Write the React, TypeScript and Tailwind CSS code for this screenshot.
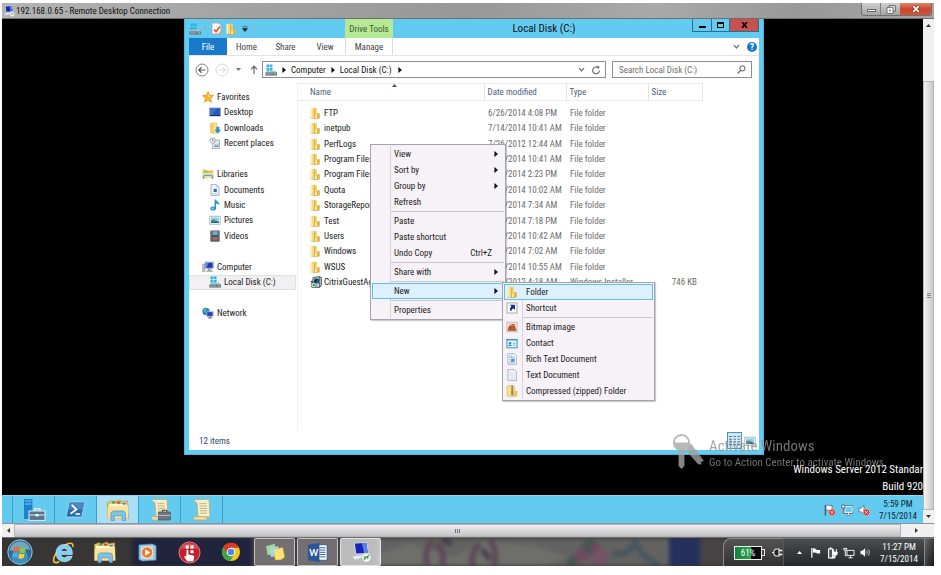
import React from 'react';
import type { ReactNode } from 'react';

type P = { className?: string };

/* ---------- small icons ---------- */

const Folder = ({ className = 'w-[10px] h-[12px]' }: P) => (
  <svg viewBox="0 0 10 12" className={className} aria-hidden="true">
    <path d="M.6 1 5.4.4V11.6L.6 11z" fill="#f3db83" />
    <path d="M.6 1 2 .8V11.200L.6 11z" fill="#fbf0bd" />
    <path d="M4.600 1.600 6.800.8V7l2.800-.6V11L4.600 11.800z" fill="#f0cf66" />
    <path d="M6.800 6.600 9.600 6V11l-2.800.6z" fill="#dfb543" />
    <path d="M4.600 1.600V11.800" stroke="#cfa23a" strokeWidth="0.8" />
    <path d="M5.400 7.400h1.400v3.600H5.400z" fill="#fdf3c6" />
    <path d="M.6 11 4.600 11.800 9.600 11" fill="none" stroke="#c99f3a" strokeWidth="0.5" />
  </svg>
);

const Drive = ({ className = 'w-[12px] h-[12px]' }: P) => (
  <svg viewBox="0 0 12 12" className={className} aria-hidden="true">
    <path d="M1.5 0.5h2.6v2.8H1.5zM4.7 0.5h2.8v2.8H4.7zM1.5 3.9h2.6v2.8H1.5zM4.7 3.9h2.8v2.8H4.7z" fill="#27b4ea" />
    <path d="M1.8 7 L10 6.5 L12 8.5 H0.4z" fill="#b9c2c8" />
    <path d="M0.4 8.3H12V11.6H0.4z" fill="#6d7a84" />
    <path d="M1.2 9.2h6v1.4h-6z" fill="#8f9ca5" />
    <path d="M9 9.2h2v1.4H9z" fill="#5fe07c" />
  </svg>
);

const DocCheck = () => (
  <svg viewBox="0 0 11 13" className="h-[13px] w-[11px]" aria-hidden="true">
    <path d="M1 1h6.5L10 3.5V12H1z" fill="#fff" stroke="#b49a94" strokeWidth="0.8" />
    <path d="M3 7.5 L5 9.8 L9 4.5" fill="none" stroke="#e0512a" strokeWidth="1.6" />
    <path d="M6.5 12 L10 8.5V12z" fill="#f0a27b" />
  </svg>
);

const Star = () => (
  <svg viewBox="0 0 12 12" className="h-[12px] w-[12px]" aria-hidden="true">
    <path d="M6 .6 7.6 4.3 11.6 4.6 8.6 7.2 9.5 11.2 6 9.1 2.5 11.2 3.4 7.2.4 4.6 4.4 4.3z" fill="#fcb92d" stroke="#e78a1c" strokeWidth="0.7" />
    <path d="M6 2.4 7 5 9.4 5.2 6 6.5z" fill="#ffe28a" />
  </svg>
);

const DesktopIcon = () => (
  <svg viewBox="0 0 12 12" className="h-[12px] w-[12px]" aria-hidden="true">
    <rect x="0.7" y="2" width="10.6" height="8" fill="#2559b8" stroke="#7f95b8" strokeWidth="0.8" />
    <path d="M1 2.4h6.5L3 9.6H1z" fill="#5b8ce0" opacity="0.5" />
    <path d="M1 9h10v1H1z" fill="#1b2f57" />
  </svg>
);

const Downloads = () => (
  <svg viewBox="0 0 12 12" className="h-[12px] w-[12px]" aria-hidden="true">
    <path d="M.8 1l4.400-.7V11.5L.8 11z" fill="#f0d272" />
    <path d="M4 1.6 8 .8V11L4 11.8z" fill="#f8e294" stroke="#d4ab45" strokeWidth="0.4" />
    <path d="M7.6 5h2.4v3h1.6L8.8 11.6 6 8h1.6z" fill="#2f93dc" stroke="#1b6cae" strokeWidth="0.4" />
  </svg>
);

const Recent = () => (
  <svg viewBox="0 0 12 12" className="h-[12px] w-[12px]" aria-hidden="true">
    <path d="M4 3h6.5v8.5H3z" fill="#dfe5ea" stroke="#93a2ae" strokeWidth="0.7" />
    <circle cx="3.6" cy="3.6" r="2.7" fill="#eef3f7" stroke="#8b9aa8" strokeWidth="0.8" />
    <path d="M3.6 2v1.8h1.4" fill="none" stroke="#55677a" strokeWidth="0.6" />
    <path d="M5 9.5 6.5 7 8 8.5 9.5 6v4H5z" fill="#7fa3c0" />
  </svg>
);

const Libraries = () => (
  <svg viewBox="0 0 12 12" className="h-[12px] w-[12px]" aria-hidden="true">
    <path d="M.6 1.6h4l.8 1h6V9H.6z" fill="#e8c65c" />
    <path d="M2 3h4v3H2z" fill="#7cc46e" />
    <path d="M6 3.4h4v3H6z" fill="#e9a95c" />
    <path d="M.6 4.600h10.8V10H.6z" fill="#f8e08c" />
    <path d="M1.6 11V8.8c0-1 .6-1.4 1.4-1.4h6c.8 0 1.4.4 1.4 1.4v2.2" fill="none" stroke="#4ea6da" strokeWidth="1.4" />
  </svg>
);

const Documents = () => (
  <svg viewBox="0 0 12 12" className="h-[12px] w-[12px]" aria-hidden="true">
    <path d="M2 .6h5.6L10 3v8.4H2z" fill="#f6f9fc" stroke="#8fa1b3" strokeWidth="0.8" />
    <path d="M7.6.6V3H10" fill="#d5dfe8" stroke="#8fa1b3" strokeWidth="0.5" />
    <rect x="4.6" y="4.8" width="3.2" height="3.2" fill="#2f6fb5" />
    <path d="M3.4 9.6h5" stroke="#9db2c6" strokeWidth="0.7" />
  </svg>
);

const Music = () => (
  <svg viewBox="0 0 12 12" className="h-[12px] w-[12px]" aria-hidden="true">
    <path d="M5.6.4h1.4c.2 2 3.8 2.200 3.400 5.800-.6-1.200-1.800-1.600-3.400-1.800v5c0 1.400-1.4 2.2-3 2.2S1 10.8 1.200 9.400c.2-1.400 2-2.200 4.400-1.600z" fill="#2a8fda" />
    <ellipse cx="3.6" cy="9.4" rx="1.4" ry="1" fill="#86c8f5" />
  </svg>
);

const Pictures = () => (
  <svg viewBox="0 0 12 12" className="h-[12px] w-[12px]" aria-hidden="true">
    <rect x="0.8" y="2.2" width="10.4" height="8" fill="#fff" stroke="#98a6b3" strokeWidth="0.8" />
    <path d="M2 3.4h8v5.6H2z" fill="#8fcdf0" />
    <path d="M2 6.6 5 5.6 10 8v1H2z" fill="#3b8f55" />
    <path d="M2 8h8v1H2z" fill="#1f5fa5" />
  </svg>
);

const Videos = () => (
  <svg viewBox="0 0 12 12" className="h-[12px] w-[12px]" aria-hidden="true">
    <rect x="1.4" y="0.6" width="9.2" height="11" fill="#38414b" />
    <path d="M3.4 1.2h5.2v4H3.4z" fill="#6fb0cf" />
    <path d="M3.4 6.6h5.2v4H3.4z" fill="#a06a60" />
    <path d="M2.3 1.4v9.6M9.7 1.4v9.6" stroke="#e8edf2" strokeWidth="0.7" strokeDasharray="1 1" />
  </svg>
);

const Computer = () => (
  <svg viewBox="0 0 12 12" className="h-[12px] w-[12px]" aria-hidden="true">
    <path d="M.4 3h2.6v7.6H.4z" fill="#b8c0c8" stroke="#7b8794" strokeWidth="0.4" />
    <rect x="3" y="1" width="8.4" height="6.6" fill="#c6cdd4" stroke="#7d8892" strokeWidth="0.5" />
    <rect x="3.8" y="1.8" width="6.8" height="5" fill="#1c38b8" />
    <path d="M3.8 1.8h3L4.600 6.8H3.8z" fill="#5f7fe6" />
    <path d="M6 7.6h2.6v1.6H6zM4.6 9.2h5.6l.8 1.6H4z" fill="#98a3ad" />
  </svg>
);

const Network = () => (
  <svg viewBox="0 0 12 12" className="h-[12px] w-[12px]" aria-hidden="true">
    <circle cx="4" cy="4.4" r="3.6" fill="#2b7bd6" />
    <path d="M1.4 3C3 1 4 2 5.4 1.2 4.6 3 3 3.4 3.4 5.4 2 5.4 1.2 4.4 1.4 3z" fill="#53c860" />
    <rect x="4.4" y="4.4" width="7" height="5.2" fill="#dfe5ec" stroke="#7d8892" strokeWidth="0.4" />
    <rect x="5.1" y="5.1" width="5.6" height="3.8" fill="#1c46c4" />
    <path d="M7 9.6h2v1H7zM5.8 10.6h4.4v.9H5.8z" fill="#6d7a88" />
  </svg>
);

const Installer = () => (
  <svg viewBox="0 0 12 12" className="h-[12px] w-[12px]" aria-hidden="true">
    <path d="M3 1.5 9.6.5 11.4 1.5V9L9.8 11.4H2z" fill="#c3cbd1" stroke="#36424c" strokeWidth="0.8" />
    <path d="M4 2.6h5v4.8H4z" fill="#1e5f93" />
    <path d="M9.6.6v10.6" stroke="#36424c" strokeWidth="0.7" />
    <path d="M1 5 3 7.4 7.2 3" fill="none" stroke="#111" strokeWidth="1.1" />
    <circle cx="3.6" cy="9" r="2.6" fill="#e8f3e8" stroke="#3d4a55" strokeWidth="0.6" />
    <circle cx="3.8" cy="9" r="1.3" fill="#2fa84c" />
  </svg>
);

const ShortcutIcon = () => (
  <svg viewBox="0 0 12 12" className="h-[12px] w-[12px]" aria-hidden="true">
    <rect x="1" y="1" width="10" height="10" fill="#fff" stroke="#9aa3ad" strokeWidth="0.9" />
    <path d="M4 2.8H9v5L7.4 6.4C6 7 5.4 8 5.2 9.6 3.4 8 3.6 5.6 5.4 4.4z" fill="#1d2f86" />
  </svg>
);

const Bitmap = () => (
  <svg viewBox="0 0 12 12" className="h-[12px] w-[12px]" aria-hidden="true">
    <rect x="0.8" y="1.2" width="10.4" height="9.8" fill="#e6dfd9" stroke="#c2b8b0" strokeWidth="0.7" />
    <path d="M2 7.6C3 4 6 2.4 8.4 3.4L10 8.6H2z" fill="#d8402e" />
    <path d="M4 4.800 6 3.4 7.6 5z" fill="#f3b33c" />
    <path d="M1.8 8h8.4v2H1.8z" fill="#a8693a" />
    <path d="M5.600 6.600h2.4v1.2H5.600z" fill="#5f9c46" />
  </svg>
);

const Contact = () => (
  <svg viewBox="0 0 12 12" className="h-[12px] w-[12px]" aria-hidden="true">
    <rect x="0.9" y="2.4" width="10.2" height="8.400" fill="#dff1fb" stroke="#3c98cc" strokeWidth="1" />
    <path d="M.6 2h10.8v1.4H.6z" fill="#3c98cc" />
    <circle cx="4" cy="6.2" r="1.2" fill="#3a86a8" />
    <path d="M2.2 9c.4-1.8 3.2-1.8 3.6 0z" fill="#3a86a8" />
    <path d="M7 6.4h2.600M7 8.200h2.600" stroke="#5cafc8" strokeWidth="0.8" />
  </svg>
);

const RichText = () => (
  <svg viewBox="0 0 12 12" className="h-[12px] w-[12px]" aria-hidden="true">
    <path d="M1.8.6H8L10.4 3v8.4H1.8z" fill="#edf4fb" stroke="#9db0c4" strokeWidth="0.8" />
    <path d="M3.2 3h3M3.2 4.6h5.6M3.2 9.8h5.6" stroke="#7f9fc4" strokeWidth="0.7" />
    <path d="M5 5.8h3.6v3H5z" fill="#4e93d2" />
    <path d="M3.2 6.4h1.2M3.2 8h1.2" stroke="#7f9fc4" strokeWidth="0.7" />
  </svg>
);

const TextDoc = () => (
  <svg viewBox="0 0 12 12" className="h-[12px] w-[12px]" aria-hidden="true">
    <path d="M1.8.6H8L10.4 3v8.4H1.8z" fill="#f0f4f9" stroke="#9aa8b8" strokeWidth="0.8" />
    <path d="M3.2 3.4h3.4M3.2 5h5.6M3.2 6.6h5.6M3.2 8.2h5.6M3.2 9.8h5.6" stroke="#cfdae6" strokeWidth="0.6" />
  </svg>
);

const Zip = () => (
  <svg viewBox="0 0 12 12" className="h-[12px] w-[12px]" aria-hidden="true">
    <path d="M1 1 6 .4V11.6L1 11z" fill="#f6e08c" stroke="#d4ab45" strokeWidth="0.5" />
    <path d="M6 .8 8.400 1.200V5.800L11 6.400V11L6 11.6z" fill="#edca60" stroke="#d4ab45" strokeWidth="0.5" />
    <path d="M6.2.8v6.600" stroke="#5d6975" strokeWidth="1.6" strokeDasharray="1 .7" />
    <path d="M5.2 7.2h2v2.6h-2z" fill="#6f7c88" />
  </svg>
);

const Tri = ({ className = 'h-[6px] w-[4px]' }: P) => (
  <svg viewBox="0 0 4 6" className={className} aria-hidden="true">
    <path d="M.4 0 4 3 .4 6z" fill="#111" />
  </svg>
);

const Chevron = ({ className = 'h-[5px] w-[7px]' }: P) => (
  <svg viewBox="0 0 7 5" className={className} aria-hidden="true">
    <path d="M1 1 3.5 4 6 1" fill="none" stroke="#777" strokeWidth="1.2" />
  </svg>
);

/* ---------- taskbar icons ---------- */

const ServerManager = () => (
  <svg viewBox="0 0 24 24" className="h-[24px] w-[24px]" aria-hidden="true">
    <path d="M2 1h8.4v20H2z" fill="#1b83cc" />
    <path d="M3 2h6.4v2H3zM3 5h6.4v2H3z" fill="#4aa9e4" />
    <path d="M12.6 13v-2.2h5.4V13" fill="none" stroke="#dfe7ec" strokeWidth="1.4" />
    <rect x="7" y="13" width="16" height="9.4" fill="#56748c" stroke="#e3edf4" strokeWidth="1" />
    <path d="M7.4 17h15.2" stroke="#e3edf4" strokeWidth="1" />
    <path d="M13.6 16h3v2.4h-3z" fill="#fff" />
  </svg>
);

const PowerShell = () => (
  <svg viewBox="0 0 22 18" className="h-[17px] w-[21px]" aria-hidden="true">
    <path d="M4.4 1H21L17.6 17H1z" fill="#2a6aa8" stroke="#a8d3ee" strokeWidth="1" />
    <path d="M5 2h15.4L18.6 9H3.4z" fill="#5794c8" opacity="0.7" />
    <path d="M7 4.2 12 9 5.8 13.6" fill="none" stroke="#fff" strokeWidth="1.9" />
    <path d="M11 13.8h5" stroke="#fff" strokeWidth="1.7" />
  </svg>
);

const Explorer = () => (
  <svg viewBox="0 0 24 24" className="h-[24px] w-[24px]" aria-hidden="true">
    <path d="M1.4 4.6 6 2.6l2 1.6 6-2.2 1.6 1.8 6-1 .8 17.6H1.6z" fill="#e7c768" stroke="#b98f35" strokeWidth="0.6" />
    <path d="M3 6h18v5H3z" fill="#fdf6d3" />
    <path d="M6 3.4h3.4v2H6z" fill="#55a045" />
    <path d="M11 3.6h3.4v2H11z" fill="#d5432f" />
    <path d="M16.6 5h3.2v1.6h-3.2z" fill="#3f7fd0" />
    <path d="M1.8 8.6 22 7.6V20.6H1.6z" fill="#f7e39b" />
    <path d="M5 22.6V16c0-2 1-3 3-3h8.4c2 0 3 1 3 3v6.6h-3.2v-4.8H8.2v4.8z" fill="#7fc2ea" stroke="#4990c4" strokeWidth="0.7" />
  </svg>
);

const Scroll = ({ tool = false }: { tool?: boolean }) => (
  <svg viewBox="0 0 22 24" className="h-[24px] w-[22px]" aria-hidden="true">
    <path d="M4.6 1.4H19c-1 1-1.2 2-.8 3.6L19 19H7L6 5C5.6 3.4 3.4 4.4 3.2 3 3 2 3.6 1.4 4.6 1.4z" fill="#f7edcb" stroke="#bda465" strokeWidth="0.7" />
    <path d="M2.4 18.6h13c0 2 .4 3 2 3.4H4.6c-1.6 0-2.4-1.4-2.2-3.4z" fill="#eddba6" stroke="#bda465" strokeWidth="0.7" />
    <path d="M8.4 5.6h7.2M8.6 8h7.2M8.8 10.4H16M9 12.8h7M9 15.2h7" stroke="#b9a67a" strokeWidth="0.8" />
    {tool && (
      <g>
        <path d="M13.6 14v-1.8h4.2V14" fill="none" stroke="#444d55" strokeWidth="1.1" />
        <path d="M9.4 14h12v8h-12z" fill="#6c7780" stroke="#3d464e" strokeWidth="0.6" />
        <path d="M9.4 17.4h12" stroke="#d3dae0" strokeWidth="0.8" />
      </g>
    )}
  </svg>
);

const StartOrb = () => (
  <svg viewBox="0 0 26 26" className="h-[26px] w-[26px]" aria-hidden="true">
    <circle cx="13" cy="13" r="12.2" fill="#2d6c97" stroke="#9dc6dd" strokeWidth="1" />
    <circle cx="13" cy="18" r="8" fill="#48a8cf" opacity="0.65" />
    <path d="M2.6 11a10.6 10.6 0 0 1 20.8 0C17 8.6 9 14 2.6 11z" fill="#b5d4e4" opacity="0.55" />
    <path d="M7 8.4c2-1 3.6-1 5.4 0l-1 4.6c-1.8-1-3.4-1-5.4 0z" fill="#ee6a2e" />
    <path d="M13.4 8.8c2 1 3.6 1 5.6 0l-1.2 4.6c-2 1-3.6 1-5.4 0z" fill="#8cc83c" />
    <path d="M5.8 14c2-1 3.6-1 5.4 0l-1 4.4c-1.8-1-3.4-1-5.2 0z" fill="#4fa8ea" />
    <path d="M12.2 14.4c2 1 3.6 1 5.4 0l-1 4.6c-2 1-3.6 1-5.4 0z" fill="#fbcf3b" />
  </svg>
);

const InternetExplorer = () => (
  <svg viewBox="0 0 24 24" className="h-[23px] w-[23px]" aria-hidden="true">
    <path d="M21.600 6.200C22.600 3 20.600 1.400 16.600 2.800 9 5.400 1.400 14.800 1.600 20.200c.2 3 3.200 2.800 6 1.200" fill="none" stroke="#f5c531" strokeWidth="1.600" />
    <path fillRule="evenodd" d="M12.8 3.600C7.400 3.600 4.200 7.600 4.200 12.600c0 5.400 3.600 9 8.800 9 4.200 0 7-2.200 8-5.600h-5.200c-.6 1-1.600 1.400-2.800 1.400-2.200 0-3.600-1.400-3.800-3.400h12C21.600 8 18.600 3.600 12.800 3.600zM9.200 10.800c.4-1.900 1.800-3 3.600-3s3.200 1.100 3.400 3z" fill="#7ed0f4" stroke="#e4f5fd" strokeWidth="0.6" />
  </svg>
);

const MediaPlayer = () => (
  <svg viewBox="0 0 20 20" className="h-[19px] w-[19px]" aria-hidden="true">
    <path d="M1 2 15 1 19 3V18L5 19 1 17.400z" fill="#8fc3e2" stroke="#5a93ba" strokeWidth="0.700" />
    <path d="M3 3.600 16 2.800V17L3 17.200z" fill="#b9dcef" />
    <circle cx="9.600" cy="10" r="6" fill="#ee7a22" stroke="#fff" strokeWidth="0.800" />
    <path d="M7.600 6.600 13 10 7.600 13.400z" fill="#fff" />
  </svg>
);

const RedApp = () => (
  <svg viewBox="0 0 24 24" className="h-[23px] w-[23px]" aria-hidden="true">
    <circle cx="12" cy="12" r="11" fill="#c2202c" stroke="#e98088" strokeWidth="1" />
    <path d="M2.600 9a10 10 0 0 1 18.800 0c-6-3-13-3-18.800 0z" fill="#ef8088" opacity="0.500" />
    <path d="M8 4.800h3.200V8H8zM13 4.800h3.200V8H13zM13 9.600h3.200v3.200H13z" fill="#fff" />
    <path d="M9 9.400c1-.4 1.800 0 1.800 1V14l5 1c1 .4 1.200 1 1 2l-.8 4H9.600L6.400 16.400c.2-1 1.400-1 2.200 0z" fill="#fff" />
  </svg>
);

const Chrome = () => (
  <svg viewBox="0 0 22 22" className="h-[20px] w-[20px]" aria-hidden="true">
    <circle cx="11" cy="11" r="10" fill="#f3c71f" />
    <path d="M2.300 6A10 10 0 0 0 10 21l4.600-7.600L6.800 13z" fill="#3fa24a" />
    <path d="M2.300 6A10 10 0 0 1 19.800 6.200H11L7 13z" fill="#d93a2b" />
    <circle cx="11" cy="11" r="4.700" fill="#fff" />
    <circle cx="11" cy="11" r="3.600" fill="#4a8be6" />
  </svg>
);

const StickyNotes = () => (
  <svg viewBox="0 0 24 22" className="h-[20px] w-[22px]" aria-hidden="true">
    <path d="M2 4.600 11.600 2 13.600 12 4 14.600z" fill="#9ddc8f" />
    <path d="M6 6 15.600 4.600 17 15 7.600 16.600z" fill="#a7d4ef" />
    <path d="M10.400 8.400 20.400 6 22.600 16.600 18.600 19.600 12.400 19.800z" fill="#fbe36f" stroke="#dcb93c" strokeWidth="0.400" />
  </svg>
);

const WordIcon = () => (
  <svg viewBox="0 0 22 22" className="h-[21px] w-[21px]" aria-hidden="true">
    <rect x="11" y="3" width="10" height="16" fill="#fff" stroke="#2b579a" strokeWidth="0.800" />
    <path d="M13 6h6.400M13 8.400h6.400M13 10.800h6.400M13 13.200h6.400M13 15.600h6.400" stroke="#2b579a" strokeWidth="1" />
    <path d="M1 3 13 .8V21.200L1 19z" fill="#2b579a" />
    <text x="7" y="14.400" textAnchor="middle" fontSize="9" fontWeight="700" fill="#fff" fontFamily="Lato, sans-serif">W</text>
  </svg>
);

const RemoteDesktop = ({ className = 'h-[22px] w-[22px]' }: P) => (
  <svg viewBox="0 0 22 22" className={className} aria-hidden="true">
    <path d="M4 2 17 1.400 18.600 12.600 5.600 13.400z" fill="#dfe6ee" />
    <path d="M4.800 2.600 16.400 2 17.800 12 6.200 12.600z" fill="#1526b4" />
    <path d="M12 2.200 16.400 2 17.800 12 14 12.200z" fill="#5d80e8" />
    <path d="M1.400 15.400 12 13.600l4 2.400L5 19z" fill="#e7ecf1" stroke="#a4aeb8" strokeWidth="0.500" />
    <circle cx="16.400" cy="16.600" r="4.600" fill="#f5f8f5" stroke="#a9b5ab" strokeWidth="0.600" />
    <path d="M13.800 18.600l2-1.800-1.400-1.600M19 14.200l-2 1.800 1.400 1.600" fill="none" stroke="#2a9a3c" strokeWidth="1.300" />
  </svg>
);

/* ---------- tray icons ---------- */

const BadgeX = ({ x }: { x: number }) => (
  <g>
    <circle cx={x} cy="8.400" r="3.300" fill="#d9332b" stroke="#fff" strokeWidth="0.400" />
    <path d={`M${x - 1.3} 7.100l2.600 2.600M${x + 1.3} 7.100l-2.600 2.600`} stroke="#fff" strokeWidth="0.900" />
  </g>
);

const FlagError = () => (
  <svg viewBox="0 0 12 12" className="h-[12px] w-[12px]" aria-hidden="true">
    <path d="M1.400 1v10.600" stroke="#4c5a64" strokeWidth="1.400" />
    <path d="M2 1.400c2-1 3.400 1 6 0v5c-2.600 1-4-1-6 0z" fill="#fff" stroke="#4c5a64" strokeWidth="0.700" />
    <BadgeX x={8} />
  </svg>
);

const Net = ({ c = '#fff', o = '#37474f' }: { c?: string; o?: string }) => (
  <svg viewBox="0 0 12 12" className="h-[12px] w-[12px]" aria-hidden="true">
    <path d="M4 3.400h7v5H4z" fill={o} stroke={c} strokeWidth="1" />
    <path d="M5.400 10.800h4.200M7.500 8.600v2M.8 1.400h3M1 1v2.200h2.600V1M2.300 3.400v5.400H4" fill="none" stroke={c} strokeWidth="1" />
  </svg>
);

const RemoteNet = () => (
  <svg viewBox="0 0 12 12" className="h-[12px] w-[12px]" aria-hidden="true">
    <path d="M4 2.600h7.200v5.800H4zM5.400 10.800h4.400M7.600 8.600v2" fill="none" stroke="#47555f" strokeWidth="2" />
    <path d="M4 2.600h7.200v5.800H4z" fill="#63caf0" stroke="#fff" strokeWidth="0.900" />
    <path d="M5.400 10.800h4.400M7.600 8.600v2" stroke="#fff" strokeWidth="0.900" />
    <path d="M.8 1h3v3h-3zM2.300 4v5.400H4" fill="#fff" stroke="#47555f" strokeWidth="0.800" />
  </svg>
);

const SpeakerError = () => (
  <svg viewBox="0 0 12 12" className="h-[12px] w-[12px]" aria-hidden="true">
    <path d="M1 4.200h2L6 1.400v9L3 7.800H1z" fill="#fff" stroke="#4c5a64" strokeWidth="0.700" />
    <BadgeX x={8.4} />
  </svg>
);

/* ---------- data ---------- */

const nav: ({ label: string; icon: ReactNode; child?: boolean; active?: boolean } | null)[] = [
  { label: 'Favorites', icon: <Star /> },
  { label: 'Desktop', icon: <DesktopIcon />, child: true },
  { label: 'Downloads', icon: <Downloads />, child: true },
  { label: 'Recent places', icon: <Recent />, child: true },
  null,
  { label: 'Libraries', icon: <Libraries /> },
  { label: 'Documents', icon: <Documents />, child: true },
  { label: 'Music', icon: <Music />, child: true },
  { label: 'Pictures', icon: <Pictures />, child: true },
  { label: 'Videos', icon: <Videos />, child: true },
  null,
  { label: 'Computer', icon: <Computer /> },
  { label: 'Local Disk (C:)', icon: <Drive />, child: true, active: true },
  null,
  { label: 'Network', icon: <Network /> },
];

const files: [string, string, string, string][] = [
  ['FTP', '6/26/2014 4:08 PM', 'File folder', ''],
  ['inetpub', '7/14/2014 10:41 AM', 'File folder', ''],
  ['PerfLogs', '7/26/2012 12:44 AM', 'File folder', ''],
  ['Program Files', '7/14/2014 10:41 AM', 'File folder', ''],
  ['Program Files (x86)', '7/14/2014 2:23 PM', 'File folder', ''],
  ['Quota', '7/15/2014 10:02 AM', 'File folder', ''],
  ['StorageReports', '7/15/2014 7:34 AM', 'File folder', ''],
  ['Test', '7/14/2014 7:18 PM', 'File folder', ''],
  ['Users', '7/14/2014 10:42 AM', 'File folder', ''],
  ['Windows', '7/15/2014 7:02 AM', 'File folder', ''],
  ['WSUS', '7/14/2014 10:55 AM', 'File folder', ''],
  ['CitrixGuestAgent', '9/13/2012 4:18 AM', 'Windows Installer', '746 KB'],
];

type Item = { label: string; sub?: boolean; hint?: string; active?: boolean; icon?: ReactNode } | null;

const contextMenu: Item[] = [
  { label: 'View', sub: true },
  { label: 'Sort by', sub: true },
  { label: 'Group by', sub: true },
  { label: 'Refresh' },
  null,
  { label: 'Paste' },
  { label: 'Paste shortcut' },
  { label: 'Undo Copy', hint: 'Ctrl+Z' },
  null,
  { label: 'Share with', sub: true },
  null,
  { label: 'New', sub: true, active: true },
  null,
  { label: 'Properties' },
];

const newMenu: Item[] = [
  { label: 'Folder', icon: <Folder />, active: true },
  { label: 'Shortcut', icon: <ShortcutIcon /> },
  null,
  { label: 'Bitmap image', icon: <Bitmap /> },
  { label: 'Contact', icon: <Contact /> },
  { label: 'Rich Text Document', icon: <RichText /> },
  { label: 'Text Document', icon: <TextDoc /> },
  { label: 'Compressed (zipped) Folder', icon: <Zip /> },
];

/* ---------- pieces ---------- */

function Menu({ items, className }: { items: Item[]; className: string }) {
  return (
    <ul className={`absolute border border-[#a5a3a8] bg-[#f6f2f8] py-px shadow-[1px_1px_1px_rgba(0,0,0,0.2)] ${className}`}>
      {items.map((it, i) =>
        it === null ? (
          <li key={i} className="flex h-[3px]">
            <span className="w-[20px] border-r border-[#d8d5da]" />
            <span className="mt-px mr-px h-px flex-1 bg-[#c9c6cb]" />
          </li>
        ) : (
          <li key={i} className="h-[16px] px-px">
            <button
              className={`flex h-full w-full items-center text-left text-[#1a1a1a] ${
                it.active ? 'bg-[#dcf0fd] outline-1 -outline-offset-1 outline-[#5cc0ec]' : ''
              }`}
            >
              <span className={`flex h-full w-[19px] shrink-0 items-center justify-center pr-[3px] ${it.active ? '' : 'border-r border-[#d8d5da]'}`}>
                {it.icon}
              </span>
              <span className="flex-1 pl-[3px]">{it.label}</span>
              {it.hint && <span className="pr-[12px]">{it.hint}</span>}
              {it.sub && <Tri className="mr-[6px] h-[6px] w-[4px]" />}
            </button>
          </li>
        ),
      )}
    </ul>
  );
}

function ExplorerWindow() {
  return (
    <section className="absolute top-0 left-[182px] flex h-[436px] w-[580px] flex-col border-x border-b border-[#4fb3dc] bg-[#63caf0] px-1 pb-1">
      <header className="flex h-[19px] items-center">
        <div className="flex flex-1 items-center">
          <Drive />
          <span className="ml-1 h-[8px] w-px bg-[#8fb6c8]" />
          <button aria-label="Properties" className="ml-[5px]"><DocCheck /></button>
          <button aria-label="New folder" className="ml-1"><Folder /></button>
          <button aria-label="Customize toolbar" className="ml-[6px]">
            <svg viewBox="0 0 6 6" className="h-[6px] w-[6px]" aria-hidden="true"><path d="M.5.8h5M.5 2.600h5L3 5.600z" fill="#222" stroke="#222" strokeWidth="0.600" /></svg>
          </button>
          <span className="ml-[6px] h-[8px] w-px bg-[#8fb6c8]" />
        </div>
        <span className="flex h-full w-[48px] items-center justify-center bg-[#b5e994] text-[#3c5a35]">Drive Tools</span>
        <h1 className="w-[299px] pl-[3px] text-center text-[11px] leading-[16px] text-[#111]">Local Disk (C:)</h1>
        <div className="flex h-[13px] w-[67px] self-start border-x border-b border-[#2a6f8c]">
          <button aria-label="Minimize" className="flex w-[19px] items-center justify-center border-r border-[#2a6f8c]">
            <span className="mt-1 h-[2px] w-[7px] bg-black" />
          </button>
          <button aria-label="Maximize" className="flex w-[18px] items-center justify-center border-r border-[#2a6f8c]">
            <span className="h-[6px] w-[7px] border border-t-2 border-black" />
          </button>
          <button aria-label="Close" className="flex flex-1 items-center justify-center bg-[#c75050]">
            <svg viewBox="0 0 7 6" className="h-[6px] w-[7px]" aria-hidden="true"><path d="M1 0 6 6M6 0 1 6" stroke="#000" strokeWidth="1.600" /></svg>
          </button>
        </div>
      </header>

      <div className="flex min-h-0 flex-1 flex-col bg-white">
        <nav className="flex h-[18px] items-stretch border-b border-[#e3e5e8] text-[#444]">
          <button className="w-[38px] bg-[#1979ca] text-white">File</button>
          <button className="w-[39px]">Home</button>
          <button className="w-[39px]">Share</button>
          <button className="w-[40px]">View</button>
          <button className="w-[48px] border-x border-[#dadbdc]">Manage</button>
          <div className="flex flex-1 items-center justify-end gap-[7px] pr-[2px]">
            <button aria-label="Expand ribbon"><Chevron /></button>
            <button aria-label="Help" className="flex h-[10px] w-[10px] items-center justify-center rounded-full bg-[#1878d1] text-[9px] leading-[10px] font-bold text-white">?</button>
          </div>
        </nav>

        <div className="flex h-[27px] items-center pr-[7px] pl-[6px]">
          <button aria-label="Back">
            <svg viewBox="0 0 14 14" className="h-[14px] w-[14px]" aria-hidden="true"><circle cx="7" cy="7" r="6" fill="#fff" stroke="#777" strokeWidth="0.900" /><path d="M10.400 7H4M6.600 4.200 3.800 7l2.800 2.800" fill="none" stroke="#555" strokeWidth="1.200" /></svg>
          </button>
          <button aria-label="Forward" className="ml-[6px]">
            <svg viewBox="0 0 14 14" className="h-[14px] w-[14px]" aria-hidden="true"><circle cx="7" cy="7" r="6" fill="#fff" stroke="#d6d6d6" strokeWidth="0.900" /><path d="M3.600 7H10M7.400 4.200 10.200 7 7.400 9.800" fill="none" stroke="#ddd" strokeWidth="1.100" /></svg>
          </button>
          <button aria-label="Recent locations" className="ml-[7px]">
            <svg viewBox="0 0 5 3" className="h-[3px] w-[5px]" aria-hidden="true"><path d="M0 0h5L2.500 3z" fill="#777" /></svg>
          </button>
          <button aria-label="Up" className="ml-[9px]">
            <svg viewBox="0 0 8 9" className="h-[9px] w-[8px]" aria-hidden="true"><path d="M4 9V1.400M1 4.400 4 1.200 7 4.400" fill="none" stroke="#666" strokeWidth="1.200" /></svg>
          </button>
          <div className="ml-1 flex h-[17px] flex-1 items-center border border-[#8d8f92] pr-1 pl-[2px] text-[#111]">
            <Drive />
            <Tri className="mx-[5px] h-[6px] w-[4px]" />
            <button>Computer</button>
            <Tri className="mx-[5px] h-[6px] w-[4px]" />
            <button>Local Disk (C:)</button>
            <Tri className="mx-[6px] h-[6px] w-[4px]" />
            <button aria-label="Address history" className="ml-auto"><Chevron /></button>
            <button aria-label="Refresh" className="ml-[6px]">
              <svg viewBox="0 0 10 10" className="h-[10px] w-[10px]" aria-hidden="true"><path d="M8.400 5.400A3.400 3.400 0 1 1 6.600 2.400" fill="none" stroke="#666" strokeWidth="1.100" /><path d="M5.200.8 8.600 1.400 7.400 4.200z" fill="#666" /></svg>
            </button>
          </div>
          <label className="ml-[6px] flex h-[17px] w-[140px] items-center border border-[#8d8f92] pr-[5px] pl-[6px]">
            <input
              type="text"
              aria-label="Search Local Disk (C:)"
              placeholder="Search Local Disk (C:)"
              className="min-w-0 flex-1 bg-transparent outline-none placeholder:text-[#6d6d6d]"
            />
            <svg viewBox="0 0 9 9" className="h-[9px] w-[9px]" aria-hidden="true"><circle cx="5.400" cy="3.400" r="2.600" fill="none" stroke="#555" strokeWidth="1" /><path d="M3.600 5.400.8 8.400" stroke="#555" strokeWidth="1.300" /></svg>
          </label>
        </div>

        <div className="flex min-h-0 flex-1">
          <aside className="w-[109px] shrink-0 border-r border-[#f0f0f2] pt-[6px]">
            <ul className="flex h-[232px] flex-col">
              {nav.map((n, i) =>
                n === null ? (
                  <li key={i} className="flex-1" />
                ) : (
                  <li key={i} className="flex-1 pr-px">
                    <a
                      href="#"
                      className={`flex h-full items-center gap-[3px] whitespace-nowrap text-[#222] ${n.child ? 'pl-[20px]' : 'pl-[13px]'} ${
                        n.active ? 'bg-[#f3f0f4] outline-1 -outline-offset-1 outline-[#e2dfe3]' : ''
                      }`}
                    >
                      {n.icon}
                      {n.label}
                    </a>
                  </li>
                ),
              )}
            </ul>
          </aside>

          <div className="flex-1">
            <table className="w-[404px] table-fixed border-collapse text-left text-[#6d6d6d]">
              <colgroup>
                <col className="w-[186px]" />
                <col className="w-[82px]" />
                <col className="w-[82px]" />
                <col className="w-[54px]" />
              </colgroup>
              <thead>
                <tr className="h-[17px] border-y border-[#e8eaee] text-[#4c607a]">
                  <th className="relative border-r border-[#e2e4e8] p-0 pl-[12px] font-normal">
                    Name
                    <svg viewBox="0 0 5 3" className="absolute top-0 left-[94px] h-[3px] w-[5px]" aria-hidden="true"><path d="M0 3h5L2.500 0z" fill="#3b5777" /></svg>
                  </th>
                  <th className="border-r border-[#e2e4e8] p-0 pl-[3px] font-normal">Date modified</th>
                  <th className="border-r border-[#e2e4e8] p-0 pl-[3px] font-normal">Type</th>
                  <th className="border-r border-[#e2e4e8] p-0 pl-[3px] font-normal">Size</th>
                </tr>
              </thead>
            </table>
            <table className="mt-1 h-[185px] w-[404px] table-fixed border-collapse text-left text-[#6d6d6d]">
              <colgroup>
                <col className="w-[186px]" />
                <col className="w-[82px]" />
                <col className="w-[82px]" />
                <col className="w-[54px]" />
              </colgroup>
              <tbody>
                {files.map(([name, date, type, size]) => (
                  <tr key={name} className="whitespace-nowrap">
                    <td className="p-0 pl-[12px] text-[#222]">
                      <span className="flex items-center">
                        <span className="flex w-[14px] shrink-0">{size ? <Installer /> : <Folder />}</span>
                        {name}
                      </span>
                    </td>
                    <td className="p-0 pl-[4px]">{date}</td>
                    <td className="p-0 pl-[4px]">{type}</td>
                    <td className="p-0 pr-[5px] text-right">{size}</td>
                  </tr>
                ))}
              </tbody>
            </table>
          </div>
        </div>

        <footer className="flex h-[19px] shrink-0 items-center pr-[3px] pl-[10px] text-[#2a4a6e]">
          <span className="flex-1">12 items</span>
          <button aria-label="Details view" className="flex h-[17px] w-[15px] items-center justify-center border border-[#4a93c4] bg-[#cfe8f8]">
            <svg viewBox="0 0 11 11" className="h-[11px] w-[11px]" aria-hidden="true"><path d="M0 1.500h3M4.500 1.500h2.500M8.500 1.500H11M0 4.200h3M4.500 4.200h2.500M8.500 4.200H11M0 6.900h3M4.500 6.900h2.500M8.500 6.900H11M0 9.600h3M4.500 9.600h2.500M8.500 9.600H11" stroke="#5a7890" strokeWidth="1.100" /></svg>
          </button>
          <button aria-label="Large icons view" className="ml-[2px]"><Pictures /></button>
        </footer>
      </div>
    </section>
  );
}

const Watermark = () => (
  <div className="pointer-events-none absolute top-[414px] left-[669px] flex whitespace-nowrap text-[#8f8f8f] opacity-80">
    <svg viewBox="0 0 34 38" className="h-[38px] w-[34px]" aria-hidden="true">
      <path d="M16 13 20 10.500 33 28l-2.600.6-.4 3-3-.4L15.500 18z" fill="#a0a0a0" />
      <circle cx="10.500" cy="9.500" r="7.600" fill="#fff" fillOpacity="0.350" stroke="#a8a8a8" strokeWidth="2" />
      <path d="M3 9.500h15c-.4 4.400-2.400 6.800-4.600 7.800V33L10.500 36 7.600 33V17.300C5 16 3.300 13.500 3 9.500z" fill="#a8a8a8" />
    </svg>
    <div className="pl-[4px]">
      <p className="pt-1 text-[15px] leading-[18px]">Activate Windows</p>
      <p className="text-[11px] leading-[16px]">Go to Action Center to activate Windows.</p>
    </div>
  </div>
);

function RemoteTaskbar() {
  const btn = 'flex h-full w-[42px] items-center justify-center border-r border-[#3f9cc4]';
  return (
    <div className="flex h-[28px] items-center border-t border-[#8fd6f2] bg-[#63caf0]">
      <span className="h-full w-[11px] border-r border-[#3f9cc4]" />
      <button aria-label="Server Manager" className={btn}><ServerManager /></button>
      <button aria-label="PowerShell" className={btn}><PowerShell /></button>
      <button aria-label="File Explorer" className={`${btn} bg-[#a8e1f7]`}><Explorer /></button>
      <button aria-label="Script tools" className={btn}><Scroll tool /></button>
      <button aria-label="Script" className={btn}><Scroll /></button>
      <div className="ml-auto flex items-center gap-[5px] pr-[2px]">
        <FlagError />
        <RemoteNet />
        <SpeakerError />
        <p className="w-[46px] text-center leading-[12px] text-[#10222c]">5:59 PM<br />7/15/2014</p>
      </div>
    </div>
  );
}

function HostTaskbar() {
  const plain = 'flex h-full w-[42px] items-center justify-center';
  const open = 'mr-[2px] flex h-full w-[41px] items-center justify-center rounded-[2px] border border-white/60';
  return (
    <div className="relative flex h-[29px] items-center overflow-hidden border-t border-[#6d6d6d] bg-[#333]">
      <svg viewBox="0 0 932 29" preserveAspectRatio="none" className="absolute inset-0 h-full w-full blur-[2px]" aria-hidden="true">
        <rect width="150" height="29" fill="#373635" />
        <rect x="130" width="125" height="29" fill="#20243c" />
        <rect x="250" width="132" height="29" fill="#443f43" />
        <rect x="376" width="296" height="29" fill="#626360" />
        <path d="M376 16 410 6 450 20 480 4 530 8 570 20 540 29H376z" fill="#6e6f6b" />
        <path d="M430 4q-10 12-4 24M434 6q10 10 6 22M478 6q-12 12-6 24M488 2q8 12 4 26" fill="none" stroke="#5a4257" strokeWidth="5" />
        <path d="M440 2l10 4M480 12l8 10" stroke="#403848" strokeWidth="5" />
        <circle cx="588" cy="10" r="9" fill="#465653" />
        <circle cx="580" cy="18" r="7" fill="#6e4a60" />
        <circle cx="598" cy="20" r="9" fill="#745366" />
        <circle cx="593" cy="9" r="4" fill="#74465c" />
        <circle cx="570" cy="24" r="5" fill="#465653" />
        <path d="M610 16q18 4 24-14M634 4q4 16 24 24" fill="none" stroke="#475560" strokeWidth="6" />
        <rect x="667" width="31" height="29" fill="#25305f" />
        <rect x="698" width="28" height="29" fill="#474443" />
        <rect x="722" width="210" height="29" fill="#393a3b" />
      </svg>
      <div className="relative flex h-full w-full items-center">
        <button aria-label="Start" className="flex h-full w-[40px] items-center pl-[5px]"><StartOrb /></button>
        <button aria-label="Internet Explorer" className={plain}><InternetExplorer /></button>
        <button aria-label="Windows Explorer" className={plain}><Explorer /></button>
        <button aria-label="Media Player" className={plain}><MediaPlayer /></button>
        <button aria-label="Launcher" className={plain}><RedApp /></button>
        <button aria-label="Chrome" className={`${plain} mr-[2px]`}><Chrome /></button>
        <button aria-label="Sticky Notes" className={`${open} bg-white/25`}><StickyNotes /></button>
        <button aria-label="Word" className={`${open} bg-white/25`}><WordIcon /></button>
        <button aria-label="Remote Desktop" className={`${open} bg-white/65`}><RemoteDesktop /></button>

        <div className="ml-auto flex h-full items-center rounded-tl-[8px] border-t border-l border-[#8b8b8b] bg-gradient-to-b from-[#555] to-[#303030] pl-[10px]">
          <span className="flex h-[14px] w-[28px] items-center justify-center border border-[#eee] bg-[linear-gradient(90deg,#15803a_0%,#27a84c_60%,#0c0c0c_62%)] text-white">61%</span>
          <span className="h-[7px] w-[3px] border-y border-r border-[#eee]" />
          <svg viewBox="0 0 12 9" className="ml-[6px] h-[9px] w-[12px]" aria-hidden="true"><path d="M1 4.500h2M8 1H5.500C3.600 1 2.800 2.600 2.800 4.500S3.600 8 5.500 8H8z" fill="#222" stroke="#eee" strokeWidth="1.100" /><path d="M8 2.500h3.400M8 6.500h3.400" stroke="#eee" strokeWidth="1.400" /></svg>
        </div>
        <div className="flex h-full items-center border-t border-l border-[#777] border-l-[#555] bg-gradient-to-b from-[#4a4d50] to-[#25282b] pl-[7px]">
          <button aria-label="Show hidden icons" className="ml-[6px]"><svg viewBox="0 0 5 3" className="h-[3px] w-[5px]" aria-hidden="true"><path d="M0 3h5L2.500 0z" fill="#fff" /></svg></button>
          <svg viewBox="0 0 12 12" className="ml-[8px] h-[11px] w-[11px]" aria-hidden="true"><path d="M2 1v10.600" stroke="#fff" strokeWidth="1.300" /><path d="M3 1.600c2-.8 2.600.6 4 .6v1h4v4H7.400V6.600C6 6.400 5 5.600 3 6.400z" fill="#fff" /></svg>
          <svg viewBox="0 0 12 12" className="ml-[5px] h-[12px] w-[12px]" aria-hidden="true"><path d="M2.600 2h4v9h-4zM3.600 1h2" fill="#555" stroke="#fff" strokeWidth="1.100" /><path d="M7.600 2v3M10.400 2v3M6.800 5h4.400v1.600c0 1-.8 1.800-2.200 1.800S6.800 7.600 6.800 6.600zM9 8v3H5" fill="#fff" stroke="#fff" strokeWidth="0.900" /></svg>
          <span className="ml-[5px]"><Net c="#eee" o="#2e3032" /></span>
          <svg viewBox="0 0 12 12" className="ml-[5px] h-[11px] w-[11px]" aria-hidden="true"><path d="M.6 4.200h2L5.600 1.400v9.200L2.600 7.800h-2z" fill="#fff" /><path d="M7.200 4c.8 1.200.8 2.800 0 4M9 2.600c1.600 2 1.600 4.800 0 6.800" fill="none" stroke="#ddd" strokeWidth="0.900" /></svg>
          <p className="w-[53px] pl-[3px] text-center leading-[12px] text-white">11:27 PM<br />7/15/2014</p>
          <button aria-label="Show desktop" className="h-full w-[10px] border-l border-[#888] bg-gradient-to-br from-[#63686c] to-[#191b1d]" />
        </div>
      </div>
    </div>
  );
}

export default function App() {
  return (
    <main className="flex min-h-screen flex-col bg-white pt-[3px] pr-[7px] pb-[9px] pl-[2px] font-['Roboto_Condensed','Roboto','Liberation_Sans',sans-serif] text-[9px] leading-[12px] text-[#222]">
      <header className="flex h-[16px] items-center border-b border-[#6f6f6f] bg-[linear-gradient(100deg,#b4b4b4_0%,#a3a3a3_25%,#989898_50%,#a9a9a9_70%,#999_85%,#a5a5a5_100%)]">
        <RemoteDesktop className="ml-px h-[12px] w-[12px]" />
        <h2 className="ml-px flex-1 text-[#111]">192.168.0.65 - Remote Desktop Connection</h2>
        <div className="mr-[2px] flex h-[13px] self-start overflow-hidden rounded-b-[3px] border-x border-b border-[#707070]">
          <button aria-label="Minimize connection" className="flex w-[19px] items-center justify-center border-r border-[#808080] bg-gradient-to-b from-[#cfcfcf] to-[#a4a4a4]">
            <span className="mt-[3px] h-[3px] w-[9px] border border-[#666] bg-white" />
          </button>
          <button aria-label="Restore connection" className="flex w-[19px] items-center justify-center bg-gradient-to-b from-[#cfcfcf] to-[#a4a4a4]">
            <svg viewBox="0 0 10 9" className="h-[9px] w-[10px]" aria-hidden="true"><path d="M3 .6h6.400v5.600H3z" fill="#ddd" stroke="#555" strokeWidth="0.800" /><path d="M1 2.600h6V8.400H1z" fill="#fff" stroke="#555" strokeWidth="0.800" /><path d="M3 4.800h2v1.600H3z" fill="#888" /></svg>
          </button>
          <button aria-label="Close connection" className="flex w-[31px] items-center justify-center bg-gradient-to-b from-[#e0866f] via-[#c8442b] to-[#d1553a]">
            <svg viewBox="0 0 8 8" className="h-[8px] w-[8px]" aria-hidden="true"><path d="M1 1 7 7M7 1 1 7" stroke="#6a2a20" strokeWidth="2.800" /><path d="M1.200 1.200 6.800 6.800M6.800 1.200 1.200 6.800" stroke="#fff" strokeWidth="1.700" /></svg>
          </button>
        </div>
      </header>

      <div className="flex flex-1">
        <div className="flex min-w-0 flex-1 flex-col">
          <div className="relative min-h-[460px] flex-1 overflow-hidden bg-black">
            <ExplorerWindow />
            <Menu items={contextMenu} className="top-[125px] left-[368px] w-[136px]" />
            <Menu items={newMenu} className="top-[263px] left-[500px] w-[153px]" />
            <Watermark />
            <p className="absolute right-0 bottom-0 text-right text-[11px] leading-[17px] whitespace-nowrap text-white">
              Windows Server 2012 Standar<br />Build 920
            </p>
          </div>
          <RemoteTaskbar />
        </div>
        <div className="flex w-[11px] flex-col items-center bg-[#f0f0f0]">
          <button aria-label="Scroll up" className="flex h-[13px] items-center"><svg viewBox="0 0 5 3" className="h-[3px] w-[5px]" aria-hidden="true"><path d="M0 3h5L2.500 0z" fill="#333" /></svg></button>
          <div className="mt-[49px] flex w-full flex-1 flex-col items-center justify-center gap-px border border-[#b5b5b5] bg-gradient-to-r from-[#f4f4f4] to-[#c9c9cb]">
            <span className="h-px w-[4px] bg-[#888]" />
            <span className="h-px w-[4px] bg-[#888]" />
            <span className="h-px w-[4px] bg-[#888]" />
          </div>
          <button aria-label="Scroll down" className="flex h-[13px] items-center"><svg viewBox="0 0 5 3" className="h-[3px] w-[5px]" aria-hidden="true"><path d="M0 0h5L2.500 3z" fill="#333" /></svg></button>
        </div>
      </div>

      <div className="flex h-[14px] items-center border-t border-[#8f9498] bg-[#f0f0f0] pr-[11px]">
        <button aria-label="Scroll left" className="flex w-[12px] justify-center"><svg viewBox="0 0 3 5" className="h-[5px] w-[3px]" aria-hidden="true"><path d="M3 0v5L0 2.500z" fill="#333" /></svg></button>
        <div className="flex h-full flex-1 items-center justify-center gap-px border border-[#b5b5b5] bg-gradient-to-b from-[#f0eff2] to-[#c3c2c5]">
          <span className="h-[4px] w-px bg-[#777]" />
          <span className="h-[4px] w-px bg-[#777]" />
          <span className="h-[4px] w-px bg-[#777]" />
        </div>
        <button aria-label="Scroll right" className="flex w-[22px] justify-center pl-[8px]"><svg viewBox="0 0 3 5" className="h-[5px] w-[3px]" aria-hidden="true"><path d="M0 0v5l3-2.500z" fill="#333" /></svg></button>
      </div>

      <HostTaskbar />
    </main>
  );
}
